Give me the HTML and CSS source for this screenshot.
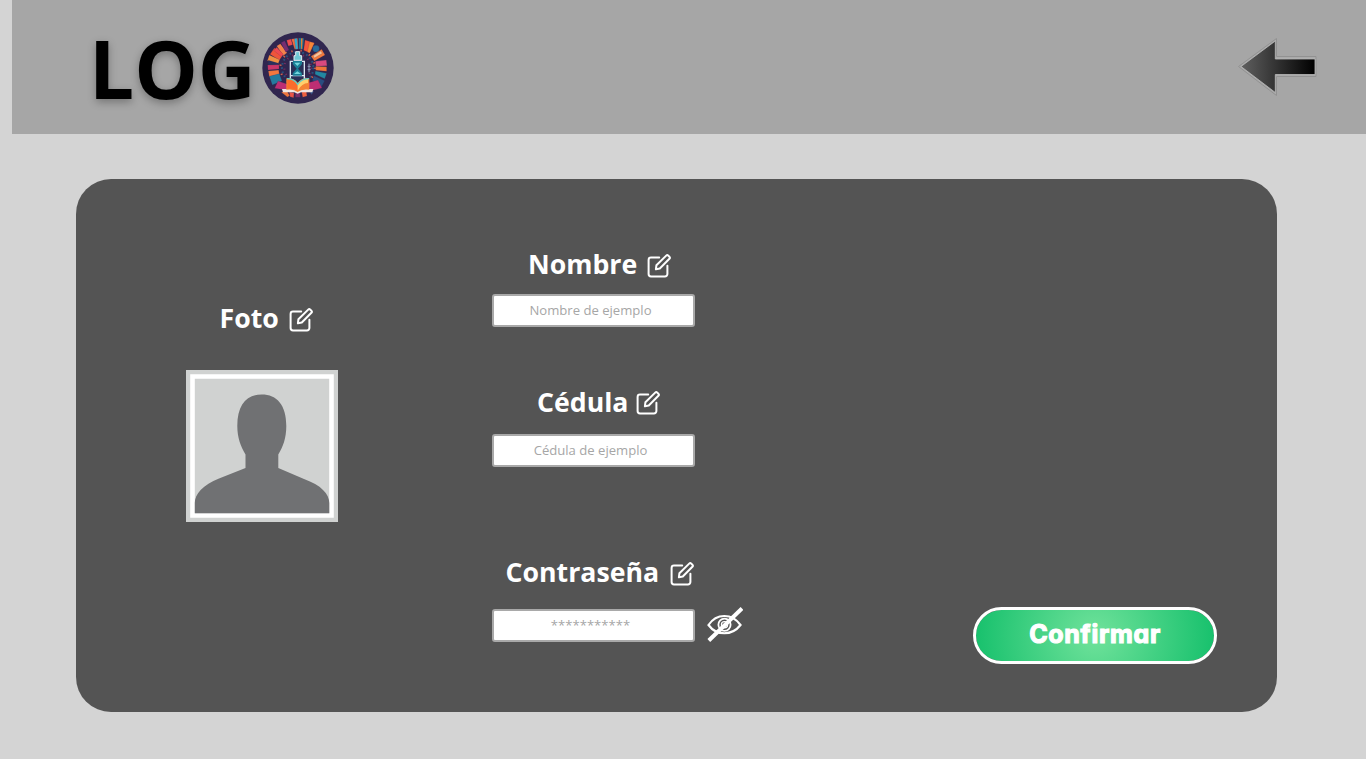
FILE: index.html
```html
<!DOCTYPE html>
<html lang="es">
<head>
<meta charset="utf-8">
<title>Perfil</title>
<link rel="stylesheet" href="styles.css">
</head>
<body>
<svg class="defs" width="0" height="0" aria-hidden="true">
  <symbol id="edit" viewBox="0 0 24 24">
    <path d="M12.200 3.600H4a2.400 2.400 0 0 0-2.400 2.400v14A2.400 2.400 0 0 0 4 22.400h14a2.400 2.400 0 0 0 2.400-2.400v-8.200M8.900 15.200l.5-3.900L19.200 1.600a1.500 1.500 0 0 1 2.100 0l1.100 1.100a1.500 1.500 0 0 1 0 2.100L12.800 14.500z" fill="none" stroke="#fff" stroke-width="2" stroke-linejoin="round" stroke-linecap="round"/>
  </symbol>
</svg>
<header class="header">
  <div class="brand">
    <span class="brand-text">LOG</span>
    <svg class="emblem" viewBox="21 19 216 216">
      <circle cx="129" cy="127" r="107" fill="#30264f"/>
      <g stroke="#30264f" stroke-width=".5">
        <path d="M109 40l19-2 2 32-11 1z" fill="#f36b3c"/><path d="M118 39l8-1 3 32-7 1z" fill="#35a9cf"/>
        <path d="M131 37l16 1-3 33-12-1z" fill="#197b9c"/><path d="M138 38l5 0-2 32-3 0z" fill="#ed8a37"/>
        <path d="M150 43l28 9-14 30-18-8z" fill="#f2543c"/><path d="M164 48l14 4-14 30-7-3z" fill="#f68638"/>
        <circle cx="183" cy="69" r="10" fill="#276a9a"/>
        <path d="M168 92l32-21 10 17-32 18z" fill="#f47a3d"/><path d="M175 90l22-14 5 7-24 14z" fill="#f8c59b"/>
        <path d="M181 107l33-4 2 17-33 2z" fill="#d9497f"/><path d="M182 122l33 1v14l-33-3z" fill="#ef743a"/>
        <path d="M181 136l34 7-6 16-29-13z" fill="#2287a1"/><path d="M177 150l32 15-10 19-27-20z" fill="#294d80"/>
        <path d="M45 86l13-19 26 20-11 17z" fill="#ef553b"/><path d="M65 61l11-7 20 27-11 9z" fill="#f3824b"/><path d="M56 74l9-9 20 21-6 7z" fill="#ef4a50"/>
        <path d="M78 51l11-6 13 28-10 6z" fill="#782d70"/><path d="M95 44l13-4 5 17-13 4z" fill="#ec4e50"/>
        <path d="M43 88l31 14-5 14-32-11z" fill="#ef9144"/><path d="M40 104l30 9v8l-31-3z" fill="#28315d"/>
        <path d="M38 118l34-1v13l-33 3z" fill="#ca3669"/><path d="M40 136l31-3 2 13-30 7z" fill="#f4783f"/>
        <path d="M43 152l30-8 8 21-29 13z" fill="#247b9e"/>
        <path d="M69 166l29 10v18l-39-6z" fill="#bd2e73"/><path d="M158 172l31-9 12 24-36 9z" fill="#bd2e73"/>
        <path d="M79 200l17-4 8 14-7 4z" fill="#ed743c"/><path d="M103 199l14 2-1 15-11-3z" fill="#e95548"/><path d="M121 202h14l1 13h-15z" fill="#782d68"/><path d="M140 199l14-2 2 14-13 4z" fill="#ee6140"/><path d="M163 197l14-2-7 12z" fill="#35528a"/>
      </g>
      <g fill="none" stroke-width="6" stroke-dasharray="5 8">
        <circle cx="128" cy="126" r="47" stroke="#28537f"/><circle cx="128" cy="126" r="40" stroke="#7c2f60" stroke-dasharray="3 14"/><circle cx="128" cy="126" r="52" stroke="#d4604a" stroke-dasharray="4 24"/>
      </g>
      <path d="M104 99h44v65h-44z" fill="#293158"/>
      <path d="M106 164v-57h42v57M107 150h40" fill="none" stroke="#dce7f2" stroke-width="4"/>
      <path d="M117 104V90h5V78h12v12h6v14z" fill="#70c9d5" stroke="#e3eef3" stroke-width="3"/>
      <path d="M114 106h27v9l-12 14 12 14v7h-28v-7l12-14-12-14z" fill="#197f96"/>
      <path d="M118 111h18l-9 10z" fill="#73d6dc"/><path d="M117 145l10-8 11 8z" fill="#73d6dc"/>
      <path d="M162 114v26M158 122h9M158 132h9" stroke="#8d9cba" stroke-width="3"/>
      <path d="M81 190h94l-3 10h-34l-10 4-10-4H84z" fill="#efe5e2"/>
      <path d="M94 158q23-1 34 13 12-15 35-13v34q-23-3-35 7-12-10-34-7z" fill="#f58334"/>
      <path d="M97 163q21-1 31 14v20q-10-10-31-8z" fill="#fa6c2c"/><path d="M128 174q12-15 31-14v12q-18 0-31 23z" fill="#ffd06c"/>
      <path d="M96 159q21 0 32 17 12-17 34-17" fill="none" stroke="#5ccfcc" stroke-width="4"/>
    </svg>
  </div>
  <svg class="back" viewBox="0 0 80 60">
    <defs><linearGradient id="dark"><stop offset="0" stop-color="#606060"/><stop offset="1" stop-color="#000"/></linearGradient></defs>
    <path d="M1.500 29.500L39.500 1.500V19.500H79V39.500H39.500V58.500z" fill="#aaa" stroke="#929292" stroke-width="1"/>
    <path d="M4 29.500L38.300 4V22H78V37.500H38.300V55.500z" fill="url(#dark)" stroke="#b7b7b7" stroke-width=".8"/>
  </svg>
</header>
<main class="card">
  <section class="photo">
    <h2 class="label photo-label">Foto<svg class="edit"><use href="#edit"/></svg></h2>
    <svg class="avatar" viewBox="0 0 152 152">
      <path fill="#d0d2d1" d="M0 0h152v152H0z"/>
      <path fill="#d0d2d1" stroke="#fff" stroke-width="4.600" d="M6.500 6.500h139v139H6.500z"/>
      <path fill="#707173" d="M75.700 24.500C91 24.500 100.300 35 100.300 56C100.300 68 97 77 92.300 84.500V98L118 109C135 115 143.300 124 143.300 133V143.200H8.800V133C8.800 124 17 115 33 108.500L59.500 98V84.500C55 77 51.300 68 51.300 56C51.300 35 60.500 24.500 75.700 24.500z"/>
    </svg>
  </section>
  <section class="fields">
    <div class="field name">
      <h2 class="label">Nombre<svg class="edit"><use href="#edit"/></svg></h2>
      <div class="input">Nombre de ejemplo</div>
    </div>
    <div class="field cedula">
      <h2 class="label">Cédula<svg class="edit"><use href="#edit"/></svg></h2>
      <div class="input">Cédula de ejemplo</div>
    </div>
    <div class="field password">
      <h2 class="label">Contraseña<svg class="edit"><use href="#edit"/></svg></h2>
      <div class="row">
        <div class="input secret">***********</div>
        <svg class="eye" viewBox="0 0 36 36" fill="none" stroke="#fff">
          <path d="M1.500 18C9.500 6 25 6 33.500 18C25 29 9.500 29 1.500 18z" stroke-width="2.200"/>
          <circle cx="17.500" cy="17.700" r="6.100" stroke-width="1.800"/><circle cx="17.500" cy="17.700" r="3.100" stroke-width="1.300"/>
          <path d="M1.800 33.500L35 1.500" stroke-width="4"/>
        </svg>
      </div>
    </div>
  </section>
  <button class="confirm"><span class="confirm-text">Confirmar</span></button>
</main>
</body>
</html>
```

FILE: styles.css
```css
* { box-sizing: border-box; }
body {
  margin: 0;
  height: 759px;
  overflow: hidden;
  background: #d4d4d4;
  font-family: "Open Sans", "Noto Sans", sans-serif;
}
.defs { display: block; }
.header {
  display: flex;
  justify-content: space-between;
  align-items: flex-start;
  height: 134px;
  margin-left: 12px;
  padding: 31px 49px 0 77px;
  background: #a6a6a6;
}
.brand { display: flex; align-items: flex-start; }
.brand-text {
  width: 173px;
  height: 72px;
  font-size: 80px;
  font-weight: 700;
  line-height: 73px;
  color: #000;
  text-shadow: 0 3px 8px rgba(0, 0, 0, .3);
}
.emblem { width: 72px; height: 72px; margin-top: .6px; }
.back { width: 80px; height: 60px; margin-top: 6px; }
.card {
  display: flex;
  align-items: flex-start;
  width: 1201px;
  height: 533px;
  margin: 45px 0 0 76px;
  border-radius: 35px;
  background: #545454;
}
.photo { width: 152px; margin: 121px 0 0 110px; }
.label {
  display: flex;
  align-items: flex-start;
  height: 36px;
  margin: 0;
  font-size: 26.700px;
  font-weight: 700;
  line-height: 36px;
  color: #fff;
}
.photo-label { padding-left: 33.500px; }
.edit { width: 24px; height: 24px; margin: 8px 0 0 10px; flex: none; }
.avatar { display: block; width: 152px; height: 152px; margin-top: 34px; }
.fields { width: 254px; margin: 67px 0 0 154px; }
.field { height: 140px; }
.name .label { padding-left: 36px; }
.cedula .label { padding-left: 45px; margin-top: -2px; }
.cedula .edit { margin: 7px 0 0 7.500px; }
.password { padding-top: 30px; }
.password .label { padding-left: 13.500px; }
.password .edit { margin-left: 11px; }
.input {
  width: 203px;
  height: 33px;
  margin-top: 12px;
  border: 2px solid #a9a9a9;
  border-radius: 3px;
  background: #fff;
  color: #a6a6a6;
  font-size: 13.100px;
  line-height: 29px;
  text-align: center;
  padding-right: 6px;
}
.cedula .input { margin-top: 14px; }
.row { display: flex; align-items: flex-start; margin-top: 19px; }
.row .input { margin-top: 0; }
.eye { width: 36px; height: 36px; margin: -2px 0 0 12px; }
.confirm {
  display: flex;
  align-items: center;
  justify-content: center;
  width: 244px;
  height: 57px;
  margin: 427.500px 0 0 227px;
  padding: 0 0 2px;
  border: 3px solid #fff;
  border-radius: 29px;
  background: radial-gradient(circle at center, #70e29b 0, #18c16d 119px) padding-box;
}
.confirm-text {
  font-family: Inter, sans-serif;
  font-feature-settings: "cv11" 1, "calt" 0;
  font-size: 25px;
  font-weight: 700;
  letter-spacing: .7px;
  line-height: 32px;
  color: #fff;
  -webkit-text-stroke: 1.200px #fff;
  stroke-linejoin: round;
}
```
